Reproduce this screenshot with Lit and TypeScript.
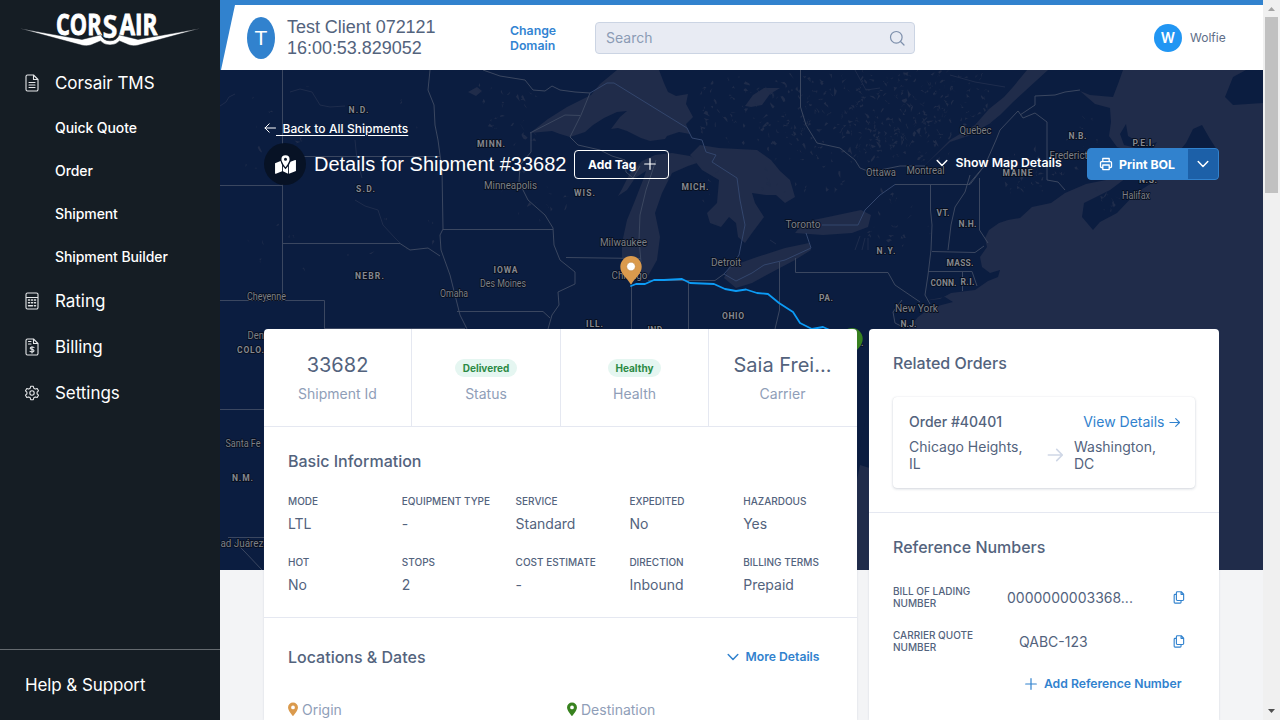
import { LitElement, html, svg, css } from "lit";
import { customElement } from "lit/decorators.js";

type Label = [string, number, number, number?];

const STATES: Label[] = [
  ["N.D.", 358.5, 110, 20], ["S.D.", 365.5, 189, 19], ["MINN.", 491, 144, 28], ["WIS.", 584.5, 193, 21],
  ["MICH.", 695, 187, 27], ["NEBR.", 369.5, 276, 29], ["IOWA", 505.5, 270, 24], ["COLO.", 250.5, 350, 27],
  ["N.M.", 242.5, 478, 21], ["PA.", 826, 298, 14], ["OHIO", 733, 316, 22], ["ILL.", 594.5, 324, 17],
  ["IND.", 656, 329.5, 17], ["MAINE", 1017.5, 173, 30], ["N.B.", 1077.5, 136, 18], ["P.E.I.", 1143.5, 142.5, 22],
  ["N.S.", 1148, 180, 18], ["VT.", 943, 213, 13], ["N.H.", 967.5, 223.5, 18], ["N.Y.", 886, 251, 19],
  ["MASS.", 960, 263, 27], ["CONN.", 943.5, 282.5, 26], ["R.I.", 967.5, 281.5, 14], ["N.J.", 908.5, 324, 16],
  ["D.C.", 856, 343, 15],
];

const CITIES: Label[] = [
  ["Minneapolis", 510.5, 186, 53], ["Des Moines", 503, 284, 46], ["Omaha", 454, 293.5, 28], ["Cheyenne", 266.5, 296.5, 39],
  ["Denver", 262, 335.5, 29], ["Santa Fe", 243, 443.5, 35], ["ad Juárez", 242, 544, 43], ["Milwaukee", 623.5, 243, 47],
  ["Chicago", 629.5, 276, 36], ["Toronto", 803, 225, 35], ["Detroit", 726, 263, 30], ["Ottawa", 881, 172.5, 30],
  ["Montreal", 925.5, 170.5, 38], ["Quebec", 975.5, 130.5, 32], ["Fredericton", 1074, 156, 49], ["Halifax", 1136, 196, 28],
  ["New York", 916.5, 309, 43],
];

const WATER = [
  "M530 133 548 119 567 107 591 95 600 84 617 70H659L664 83 668 92 676 96 688 94 686 104 693 117 686 124 690 134 679 132 667 136 665 139 650 141 641 138 627 131 618 128 611 129 620 117 627 111 617 112 604 118 593 125 585 132 570 137 560 134 552 131Z",
  "M643 180 634 203 627 220 622 243 622 257 631 277 641 280 648 276 657 260 660 237 655 213 662 193 672 173 688 166 700 162 690 156 672 153 655 155 642 161 630 173 622 189 618 196 627 190 635 178 646 171Z",
  "M700 145 719 148 757 150 771 160 780 171 790 180 795 197 785 203 776 195 766 195 752 193 755 203 764 217 752 233 745 243 738 237 736 223 729 217 721 227 710 223 707 213 717 203 719 180 702 170 690 155Z",
  "M724 278 729 267 757 257 785 248 809 243 811 250 795 260 776 270 752 283 736 288Z",
  "M795 233 804 222 828 217 861 210 871 215 868 227 852 233 823 235Z",
  "M923 167 950 140 975 125 989 109 1004 97 1013 87 1027 70H1048L1037 80 1013 102 1000 115 989 124 968 136 950 142Z",
  "M1123 70 1118 84 1113 97 1090 95 1080 91 1095 104 1110 108 1111 122 1109 136 1117 147 1138 154 1126 168 1106 180 1086 184 1065 193 1051 203 1032 207 1020 218 1008 220 999 223 989 230 985 238 987 247 980 257 982 267 990 273 1000 270 998 277 988 281 975 290 951 293 940 299 923 301 945 297 953 302 930 308 918 317 909 328 899 350 885 375 876 392 876 470 860 465 857 480V570H1263V70Z",
  "M745 106 753 95 764 88 780 88 770 94 762 105 751 107Z",
  "M468 92 477 87 482 91 476 96Z",
];

const LAND = [
  "M1110 190 1084 203 1082 217 1093 230 1100 222 1117 213 1136 193 1155 181 1183 167 1198 160 1219 153 1210 139 1202 125 1193 129 1186 143 1181 149 1155 150 1142 166Z",
  "M1120 134 1126 124 1128 136 1145 146 1157 142 1152 150 1140 149 1124 145Z",
  "M1246 70 1233 77 1225 97 1233 105 1263 103V70Z",
  "M860 330H866L869 345 864 380 868 410 861 440 857 468V330Z",
];

const BORDERS = [
  "M282.500 70V297M282 156.500H440M220 185.500H282M430 70 428 90 434 105 435 125 438 140 440 155 442 170 443 229",
  "M443 229 440 235 441 250 450 275 455 295 460 315 467 329M282 243.500H400L410 250 428 248 440 256M443 229.500H553",
  "M220 300.500H324.500V328M324 328.500H465M220 409.500H264M457 311.500H543L550 318",
  "M483 70 500 76 525 80 533 90 545 91 552 86 560 90 575 92 590 93M590 93 581 115 570 137 578 145 600 150 612 156 625 160 626 172 633 178 640 166",
  "M530 133 565 115 580 115.500M531 133V152L520 165 519 182 528 200 545 215 553 228 554 245 560 260 575 272 575 284 558 292 559 305 552 315 548 329",
  "M566 257.500 641 258.500M656 160 646 190 640 215 639 240 641 262M631.500 285V329M648 280.500H715L724 274M688.500 280V329M779.500 262V310L775 329",
  "M795.500 258V272.500H888L895 285 920 302M902 300 893 312 895 323 905 328M800.500 70V107L806 125 817 143 840 148 855 160 860 168 870 172 890 168 900 166 925 166",
  "M895 184.500H970L985 165M930.500 185V210L932 225 931 250 928 275 925 295 930 304M970 175 965 192 955 207 951 225 948 250M932 251.500 975 252.500 984 246M928 271.500H972L977 286M962.500 271V291M979.500 178V230L988 243",
  "M969 184 985 165 996 140 1000 130 1018 111 1023 118 1035 113 1047 122V180L1058 182 1065 190M1020 115 1035 105V96L1055 95 1065 92 1080 90",
  "M228 537.500H264M235 542 245 552 262 570",
];

const WATER_BORDERS =
  "M590 93 607 83 614 83 687 128 692 138 702 140 706 152 716 155 712 162 737 178 740 200 745 225 739 255 732 265 724 274 736 281 752 273 764 265 785 260 811 248 806 233 M822 225H858L865 210 880 195 895 184.500";

const RIVERS =
  "M355 200 365 206 378 210 383 225 395 238 400 243M265 168 290 166M290 92 300 89 312 92 320 105 330 107 345 106M355 140 357 160 362 178M220 106 226 102 229 97 235 94M855 70 866 90 880 88M950 75 975 82 1005 87M770 240 776 244M855 250 860 236M862 250 865 238M868 250 868 238";

// Scattered small lakes: [x, y, width, height, count]
const LAKE_FIELDS = [
  [480, 85, 60, 60, 30], [700, 75, 100, 70, 80], [800, 72, 150, 90, 280], [935, 75, 60, 60, 50],
  [870, 190, 60, 50, 20], [500, 160, 80, 60, 18], [1000, 150, 45, 45, 34], [1050, 110, 50, 65, 14],
  [225, 80, 200, 90, 14], [240, 210, 200, 100, 14], [760, 150, 90, 45, 24], [700, 170, 20, 60, 6], [1090, 188, 30, 25, 10],
];

function scatter(): string {
  let seed = 7;
  const next = () => (seed = (seed * 16807) % 2147483647) / 2147483647;
  let d = "";
  for (const [x, y, w, h, count] of LAKE_FIELDS) {
    for (let i = 0; i < count; i++) {
      d += `M${(x + next() * w).toFixed(1)} ${(y + next() * h).toFixed(1)}`;
      for (let k = 0; k < 4; k++) {
        d += `l${(next() * 5 - 2.5).toFixed(1)} ${(next() * 6 - 3).toFixed(1)}`;
      }
      d += "Z";
    }
  }
  return d;
}

const arrowRight = svg`<path d="M1 6H11.500M7.300 1.800 11.500 6 7.300 10.200" fill="none" stroke="currentColor" stroke-width="1.200" stroke-linecap="round" stroke-linejoin="round"/>`;
const chevron = html`<svg class="chev" viewBox="0 0 12 12"><path d="M1.200 3.500 6 8.500 10.800 3.500" /></svg>`;
const copyIcon = html`<svg class="copy" viewBox="0 0 12 14"><path d="M4.200.8H8.500L11 3.300V9.200a1 1 0 0 1-1 1H4.200a1 1 0 0 1-1-1V1.800a1 1 0 0 1 1-1ZM8.200.9V3.600H10.900M3.200 3.600H1.800a1 1 0 0 0-1 1v7.400a1 1 0 0 0 1 1h5.400a1 1 0 0 0 1-1V10.400"/></svg>`;
const pin = (color: string) => html`<svg class="pin" viewBox="0 0 12 16"><path fill=${color} fill-rule="evenodd" d="M6 .5A5.300 5.300 0 0 0 .7 5.800C.7 9.500 6 15 6 15s5.300-5.500 5.300-9.200A5.300 5.300 0 0 0 6 .5Zm0 3.300a2 2 0 1 1 0 4 2 2 0 0 1 0-4Z"/></svg>`;

@customElement("shipment-map")
class ShipmentMap extends LitElement {
  static styles = css`
    :host { display: block; }
    svg { display: block; width: 1043px; height: 500px; }
    .water { fill: #202c4a; }
    .speck { fill: #1f2c4a; }
    .land { fill: #0b1d40; }
    .border { fill: none; stroke: #3b4760; stroke-width: 1; }
    .wborder { fill: none; stroke: #33466d; stroke-width: 1; }
    .river { fill: none; stroke: #1e2c4c; stroke-width: 1; }
    .route { fill: none; stroke: #0c9bf5; stroke-width: 1.800; stroke-linejoin: round; stroke-linecap: round; }
    text { font-family: Roboto, "Noto Sans", sans-serif; text-anchor: middle; paint-order: stroke; stroke: #070f20; stroke-width: 1.800px; stroke-linejoin: round; }
    .state { font-size: 8.500px; font-weight: 700; fill: #85888f; }
    .city { font-size: 10.500px; fill: #7c7f86; }
  `;
  render() {
    return html`<svg viewBox="220 70 1043 500">
      <rect class="land" x="220" y="70" width="1043" height="500"/>
      ${WATER.map((d) => svg`<path class="water" d=${d}/>`)}
      ${LAND.map((d) => svg`<path class="land" d=${d}/>`)}
      <path class="speck" d=${scatter()}/>
      <path class="river" d=${RIVERS}/>
      <path class="wborder" d=${WATER_BORDERS}/>
      ${BORDERS.map((d) => svg`<path class="border" d=${d}/>`)}
      ${STATES.map(([t, x, y, w]) => svg`<text class="state" x=${x} y=${y + 3.2} textLength=${w}>${t}</text>`)}
      ${CITIES.map(([t, x, y, w]) => svg`<text class="city" x=${x} y=${y + 3.4} textLength=${w} lengthAdjust="spacingAndGlyphs">${t}</text>`)}
      <path class="route" d="M631 286 636 284 645 284 654 280 664 280 682 279 690 283 714 284 725 289 736 291 746 289.500 757 293 768 294 779 303 793 312 800 323 812 329 823 327 832 331"/>
      <path fill="#da9a4d" d="M631 256a10.700 10.700 0 0 0-10.700 10.700c0 7 6 10 10.700 18 4.700-8 10.700-11 10.700-18A10.700 10.700 0 0 0 631 256Z"/>
      <circle cx="631" cy="266.500" r="4.300" fill="#fff" stroke="#b67c36" stroke-width=".5"/>
      <path fill="#38821f" d="M852 328a10.700 10.700 0 0 0-10.700 10.700c0 7 6 10 10.700 18 4.700-8 10.700-11 10.700-18A10.700 10.700 0 0 0 852 328Z"/>
    </svg>`;
  }
}

@customElement("side-nav")
class SideNav extends LitElement {
  static styles = css`
    :host { display: flex; flex-direction: column; width: 220px; height: 720px; background: #151d24; color: #fff; font-family: Inter, sans-serif; }
    .logo { width: 180px; height: 48px; display: block; flex: none; margin-left: 20px; }
    .logo text { font: 700 29px "Open Sans", "Liberation Sans", sans-serif; fill: #fff; stroke: #fff; stroke-width: .9px; }
    .logo .mid { font-size: 33px; stroke-width: .4px; }
    .item { display: flex; align-items: center; height: 46px; font-size: 17px; letter-spacing: -.05px; padding-left: 24px; }
    .item svg { width: 16px; height: 18px; margin-right: 15px; fill: none; stroke: #e6e8ea; stroke-width: 1.100; stroke-linejoin: round; stroke-linecap: round; }
    .top { margin-top: 12px; }
    .sub { height: 43px; padding-left: 55px; display: flex; align-items: center; font-size: 14px; font-weight: 500; letter-spacing: -.09px; }
    .help { margin-top: auto; height: 71px; box-sizing: border-box; border-top: 1px solid #646a6f; padding-left: 25px; display: flex; align-items: center; font-size: 17px; letter-spacing: -.1px; }
  `;
  render() {
    return html`
      <svg class="logo" viewBox="20 0 180 48">
        <text x="56" y="35" textLength="45.500" lengthAdjust="spacingAndGlyphs">COR</text>
        <text x="119.500" y="35" textLength="38" lengthAdjust="spacingAndGlyphs">AIR</text>
        <path fill="#fff" stroke="#151d24" stroke-width=".5" d="M20 28.600 82 39.400 101 34.800Q103 40.800 110 40.800T119 34.800L138 39.400 200 28.600 138 45.300Q133 46.500 129 45L119.500 41Q116 45 110 45T100.500 41L91 45Q87 46.500 82 45.300Z"/>
        <text class="mid" x="102.500" y="38" textLength="15" lengthAdjust="spacingAndGlyphs">S</text>
      </svg>
      <div class="item top"><svg viewBox="0 0 16 18"><path d="M3.500 1H9.500L14 5.500V15.500a1.500 1.500 0 0 1-1.500 1.500h-9A1.500 1.500 0 0 1 2 15.500V2.500A1.500 1.500 0 0 1 3.500 1ZM9.500 1V5.500H14M5 8.500h6M5 11h6M5 13.500h6"/></svg>Corsair TMS</div>
      <div>
        ${["Quick Quote", "Order", "Shipment", "Shipment Builder"].map((t) => html`<div class="sub">${t}</div>`)}
      </div>
      <div class="item"><svg viewBox="0 0 16 18"><path d="M3.500 1h9A1.500 1.500 0 0 1 14 2.500v13a1.500 1.500 0 0 1-1.500 1.500h-9A1.500 1.500 0 0 1 2 15.500v-13A1.500 1.500 0 0 1 3.500 1ZM2 5.500H14"/><path d="M4.500 8h1M7.500 8h1M10.500 8h1M4.500 10.800h1M7.500 10.800h1M10.500 10.800h1M4.500 13.800h4M10.500 13.800h1" stroke-width="1.500"/></svg>Rating</div>
      <div class="item"><svg viewBox="0 0 16 18"><path d="M3.500 1H9.500L14 5.500V15.500a1.500 1.500 0 0 1-1.500 1.500h-9A1.500 1.500 0 0 1 2 15.500V2.500A1.500 1.500 0 0 1 3.500 1ZM9.500 1V5.500H14M4.500 3.500h2.500M4.500 6h2.500M10 9.500C9.500 8.800 6.200 8.600 6.200 10.200S10 11 10 12.700 6.800 14 6 13.300M8 8.500V15"/></svg>Billing</div>
      <div class="item"><svg viewBox="0 0 16 18"><circle cx="8" cy="9" r="2.200"/><path d="M6.700 2.300h2.600l.5 1.900 1.500.9 1.900-.6 1.300 2.300-1.400 1.300v1.800l1.400 1.300-1.300 2.300-1.900-.6-1.500.9-.5 1.900H6.700l-.5-1.900-1.500-.9-1.900.6-1.300-2.300 1.400-1.300V8.100L1.500 6.800l1.300-2.300 1.900.6 1.500-.9Z"/></svg>Settings</div>
      <div class="help">Help &amp; Support</div>
    `;
  }
}

@customElement("app-root")
class AppRoot extends LitElement {
  static styles = css`
    * { box-sizing: border-box; }
    :host { display: flex; width: 1280px; height: 720px; overflow: hidden; background: #f3f4f6; font-family: Inter, sans-serif; color: #53637d; }
    .page { width: 1043px; height: 720px; flex: none; display: grid; grid-template-rows: 70px 650px; overflow: hidden; }
    .header { background: #3182ce; padding-top: 5px; }
    .bar { height: 65px; background: #fff; clip-path: polygon(15px 0, 100% 0, 100% 100%, 1px 100%); display: flex; align-items: center; padding-left: 27px; }
    .badge { width: 28px; height: 42px; border-radius: 50%; background: #3182ce; color: #fff; font: 21px "Liberation Sans", sans-serif; display: flex; align-items: center; justify-content: center; }
    .client { font: 18px/21px "Liberation Sans", sans-serif; width: 235px; padding-left: 12px; letter-spacing: -.03px; }
    .change { width: 85px; font-size: 12.300px; line-height: 15px; font-weight: 600; color: #3384d2; }
    .search { width: 320px; height: 32px; border: 1px solid #cbd4e3; border-radius: 4px; background: #e8ebf3; display: flex; justify-content: space-between; align-items: center; padding: 0 9px 0 10px; font-size: 14px; color: #8b9bb5; }
    .search svg { width: 16px; height: 16px; fill: none; stroke: #7e90ac; stroke-width: 1.200; stroke-linecap: round; }
    .user { margin-left: 239px; width: 28px; height: 28px; border-radius: 50%; background: #2196f3; color: #fff; font-size: 14px; font-weight: 600; display: flex; align-items: center; justify-content: center; }
    .uname { margin-left: 8px; font-size: 12px; color: #5e6e88; }
    .stage { display: grid; grid-template-rows: 650px; grid-template-columns: 1043px; }
    .stage > * { grid-area: 1 / 1; }
    .content { z-index: 1; padding: 49px 44px 0; display: flex; flex-direction: column; }
    .back { height: 18px; display: flex; align-items: center; color: #fff; font-size: 12px; font-weight: 500; letter-spacing: .06px; }
    .back svg { width: 12px; height: 12px; }
    .back span { text-decoration: underline; text-underline-offset: 2px; white-space: pre; }
    .titlebar { height: 42px; margin-top: 6px; display: flex; align-items: center; color: #fff; }
    .round { width: 42px; height: 42px; border-radius: 50%; background: #071225; display: flex; align-items: center; justify-content: center; }
    .round svg { width: 21px; height: 19px; }
    .title { font: 20px "Liberation Sans", sans-serif; margin-left: 8px; width: 260px; white-space: nowrap; }
    .tag { width: 95px; height: 29px; border: 1px solid #fff; border-radius: 4px; display: flex; align-items: center; padding-left: 13px; gap: 8px; font-size: 12px; font-weight: 700; white-space: nowrap; }
    .tag svg, .add svg { width: 12px; height: 12px; fill: none; stroke: currentColor; stroke-width: 1.200; stroke-linecap: round; }
    .show { margin-left: auto; width: 151px; display: flex; align-items: center; gap: 7.500px; font-size: 12.300px; font-weight: 600; padding-bottom: 3px; white-space: nowrap; }
    .chev { width: 12px; height: 12px; fill: none; stroke: currentColor; stroke-width: 1.500; stroke-linecap: round; stroke-linejoin: round; flex: none; }
    .print { width: 132px; height: 32px; border: 1px solid #3182ce; border-radius: 4px; background: #3182ce; display: flex; overflow: hidden; font-size: 12.300px; font-weight: 700; }
    .print .main { width: 100px; display: flex; align-items: center; padding-left: 11px; gap: 6px; white-space: nowrap; }
    .print .main svg { width: 14px; height: 14px; fill: none; stroke: #fff; stroke-width: 1.300; stroke-linejoin: round; }
    .print .drop { flex: 1; background: #1c60a8; display: flex; align-items: center; justify-content: center; }
    .cards { margin-top: 144px; display: flex; gap: 12px; align-items: flex-start; }
    .card { background: #fff; border-radius: 4px 4px 0 0; height: 391px; box-shadow: 0 0 2px rgba(60, 80, 120, .2); }
    .left { width: 593px; }
    .right { width: 350px; }
    .stats { display: grid; grid-template-columns: 148px 149px 148px 148px; height: 98px; border-bottom: 1px solid #e5e8f1; }
    .stat { border-right: 1px solid #e5e8f1; display: flex; flex-direction: column; align-items: center; padding-top: 21px; }
    .stat:last-child { border: 0; padding-right: 1px; }
    .big { height: 30px; line-height: 30px; font-size: 20px; }
    .pill { height: 18px; margin: 9px 0 3px; padding: 0 7.500px; border-radius: 9px; background: #e5f6f1; color: #2c8a45; font-size: 10px; font-weight: 700; line-height: 19px; }
    .cap { font-size: 14px; line-height: 28px; color: #8f9eb8; }
    .h { font-size: 16px; font-weight: 500; line-height: 20px; color: #53637d; }
    .basic { height: 191px; border-bottom: 1px solid #e5e8f1; padding: 24px 0 0 24px; }
    .fields { display: grid; grid-template-columns: repeat(5, 113.800px); grid-auto-rows: 61px; margin-top: 22px; }
    .lab { font-size: 10px; font-weight: 500; line-height: 16px; text-transform: uppercase; white-space: nowrap; }
    .val { font-size: 14px; line-height: 20px; margin-top: 5px; }
    .loc { padding: 29px 24px 0; }
    .lochead { display: flex; justify-content: space-between; align-items: center; padding-right: 13.500px; }
    .more { padding-bottom: 1px; }
    .more, .add { color: #3182ce; font-size: 12.200px; font-weight: 600; display: flex; align-items: center; gap: 7px; }
    .od { display: grid; grid-template-columns: 279px 1fr; margin-top: 33px; color: #8f9eb8; font-size: 14px; line-height: 20px; }
    .od div { display: flex; align-items: center; gap: 3px; margin-left: -1px; }
    .pin { width: 12px; height: 15px; margin-top: -2px; }
    .related { height: 184px; border-bottom: 1px solid #e5e8f1; padding: 24px 24px 0; }
    .order { margin-top: 24px; height: 91px; border-radius: 4px; box-shadow: 0 1px 3px rgba(40, 60, 90, .2), 0 0 1px rgba(40, 60, 90, .12); padding: 15px 15.500px 0 16px; font-size: 14px; }
    .row1 { display: flex; justify-content: space-between; line-height: 20px; font-weight: 500; }
    .row1 .link { color: #3182ce; font-weight: 400; display: flex; align-items: center; gap: 4px; }
    .row1 svg { width: 11px; height: 11px; }
    .row2 { display: grid; grid-template-columns: 138px 27px 1fr; line-height: 17px; margin-top: 6px; align-items: center; }
    .row2 svg { width: 16px; height: 16px; color: #cfd7e6; margin-top: -1px; }
    .refs { padding: 24px 24px 0; }
    .ref { display: grid; grid-template-columns: 114px 1fr 22px; height: 44px; align-items: center; }
    .ref .rl { font-size: 10px; line-height: 12px; font-weight: 500; }
    .ref .rv { font-size: 14px; }
    .ref .inset { padding-left: 12px; }
    .list { margin-top: 18px; }
    .copy { width: 12px; height: 13px; fill: none; stroke: #3182ce; stroke-width: 1.200; stroke-linejoin: round; }
    .add { justify-content: flex-end; padding-right: 13.500px; margin-top: 13px; }
    .scroll { width: 17px; background: #f0f0f0; display: flex; flex-direction: column; align-items: center; flex: none; }
    .scroll .thumb { width: 13px; height: 176px; background: #c1c1c1; }
    .scroll svg { width: 17px; height: 17px; display: block; }
    .spacer { flex: 1; }
  `;
  render() {
    const field = (l: string, v: string) => html`<div><div class="lab">${l}</div><div class="val">${v}</div></div>`;
    const plus = html`<svg viewBox="0 0 12 12"><path d="M6 .7V11.300M.7 6H11.300"/></svg>`;
    return html`
      <side-nav></side-nav>
      <div class="page">
        <div class="header"><div class="bar">
          <div class="badge">T</div>
          <div class="client">Test Client 072121<br>16:00:53.829052</div>
          <div class="change">Change<br>Domain</div>
          <div class="search"><span>Search</span><svg viewBox="0 0 16 16"><circle cx="7.300" cy="7.300" r="5.800"/><path d="M11.500 11.500 15 15"/></svg></div>
          <div class="user">W</div><div class="uname">Wolfie</div>
        </div></div>
        <div class="stage">
          <shipment-map></shipment-map>
          <div class="content">
            <div class="back"><svg viewBox="0 0 12 12"><path d="M11.500 6H1M5.200 1.800 1 6 5.200 10.200" fill="none" stroke="#fff" stroke-linecap="round" stroke-linejoin="round"/></svg><span>  Back to All Shipments</span></div>
            <div class="titlebar">
              <div class="round"><svg viewBox="0 0 22 20"><path fill="#fff" d="M0 8.600 5.800 6.300q.6 2.500 1.600 4.200V17.200L.9 19.800Q0 20 0 19.200ZM8.300 11.800 11 15 13.700 11.800V19.700L8.300 17.200ZM14.600 10.500 16.300 7 21.100 5.200Q22 5 22 5.800V16.800L14.600 19.800Z"/><path fill="#fff" fill-rule="evenodd" d="M11 .3a4.300 4.300 0 0 0-4.300 4.300C6.700 7.800 11 13 11 13s4.300-5.200 4.300-8.400A4.300 4.300 0 0 0 11 .3Zm0 2.600a1.600 1.600 0 1 1 0 3.200 1.600 1.600 0 0 1 0-3.200Z"/></svg></div>
              <div class="title">Details for Shipment #33682</div>
              <div class="tag">Add Tag ${plus}</div>
              <div class="show">${chevron}Show Map Details</div>
              <div class="print">
                <div class="main"><svg viewBox="0 0 14 14"><path d="M3.800 4.600V1.500h6.400V4.600M3.500 10.500H2.500a1 1 0 0 1-1-1V5.700a1 1 0 0 1 1-1h9a1 1 0 0 1 1 1v3.800a1 1 0 0 1-1 1h-1M3.800 8h6.400v4.600H3.800Z"/></svg>Print BOL</div>
                <div class="drop">${chevron}</div>
              </div>
            </div>
            <div class="cards">
              <div class="card left">
                <div class="stats">
                  <div class="stat"><div class="big">33682</div><div class="cap">Shipment Id</div></div>
                  <div class="stat"><div class="pill">Delivered</div><div class="cap">Status</div></div>
                  <div class="stat"><div class="pill">Healthy</div><div class="cap">Health</div></div>
                  <div class="stat"><div class="big">Saia Frei...</div><div class="cap">Carrier</div></div>
                </div>
                <div class="basic">
                  <div class="h">Basic Information</div>
                  <div class="fields">
                    ${field("Mode", "LTL")}${field("Equipment Type", "-")}${field("Service", "Standard")}${field("Expedited", "No")}${field("Hazardous", "Yes")}
                    ${field("Hot", "No")}${field("Stops", "2")}${field("Cost Estimate", "-")}${field("Direction", "Inbound")}${field("Billing Terms", "Prepaid")}
                  </div>
                </div>
                <div class="loc">
                  <div class="lochead"><div class="h">Locations &amp; Dates</div><div class="more">${chevron}More Details</div></div>
                  <div class="od"><div>${pin("#da9a4d")}Origin</div><div>${pin("#38821f")}Destination</div></div>
                </div>
              </div>
              <div class="card right">
                <div class="related">
                  <div class="h">Related Orders</div>
                  <div class="order">
                    <div class="row1"><span>Order #40401</span><span class="link">View Details<svg viewBox="0 0 12 12">${arrowRight}</svg></span></div>
                    <div class="row2"><span>Chicago Heights,<br>IL</span><svg viewBox="0 0 12 12">${arrowRight}</svg><span>Washington,<br>DC</span></div>
                  </div>
                </div>
                <div class="refs">
                  <div class="h">Reference Numbers</div>
                  <div class="list">
                    <div class="ref"><div class="rl">BILL OF LADING<br>NUMBER</div><div class="rv">0000000003368...</div>${copyIcon}</div>
                    <div class="ref"><div class="rl">CARRIER QUOTE<br>NUMBER</div><div class="rv inset">QABC-123</div>${copyIcon}</div>
                  </div>
                  <div class="add">${plus}Add Reference Number</div>
                </div>
              </div>
            </div>
          </div>
        </div>
      </div>
      <div class="scroll">
        <svg viewBox="0 0 17 17"><path fill="#a3a3a3" d="M5 11 8.500 7 12 11Z"/></svg>
        <div class="thumb"></div><div class="spacer"></div>
        <svg viewBox="0 0 17 17"><path fill="#505050" d="M5 6 8.500 10 12 6Z"/></svg>
      </div>
    `;
  }
}
